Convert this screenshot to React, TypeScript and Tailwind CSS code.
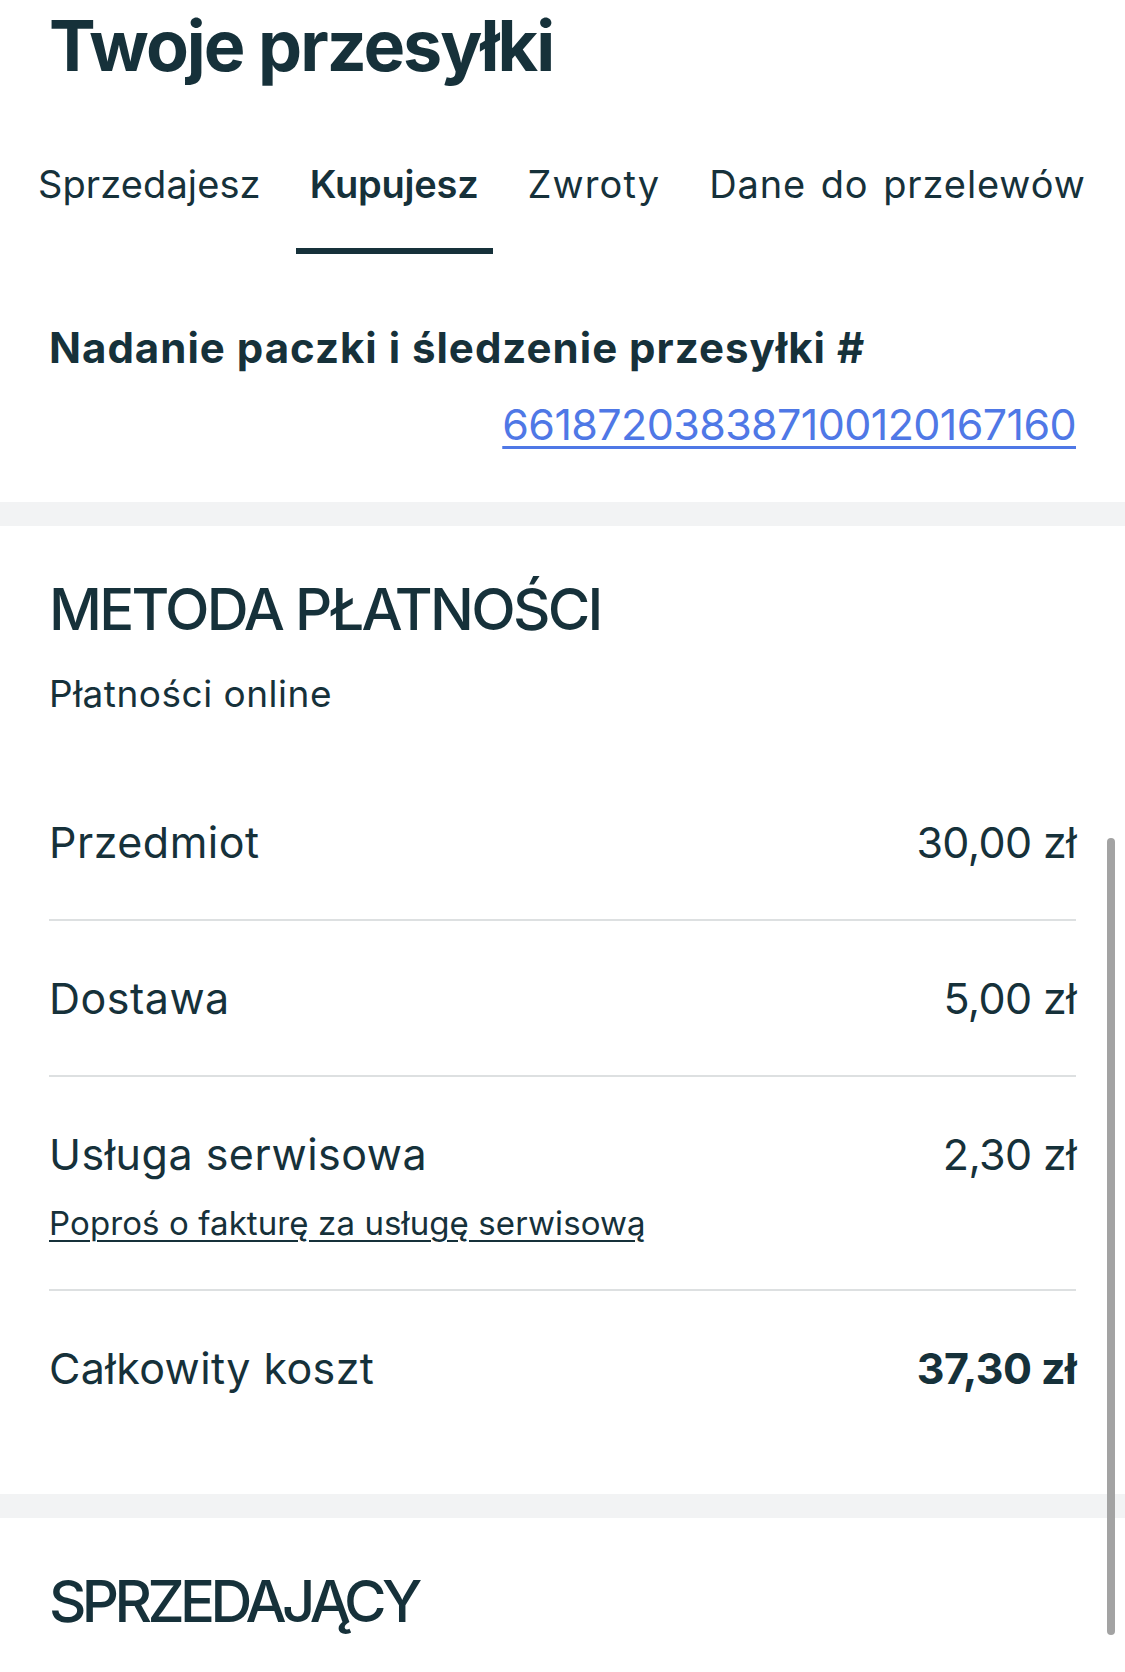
const tabs = [
  { label: "Sprzedajesz", extra: "tracking-[0.1px]" },
  { label: "Kupujesz", extra: "tracking-[-0.2px]" },
  { label: "Zwroty", extra: "tracking-[1.1px]" },
  { label: "Dane do przelewów", extra: "tracking-[0.9px] [word-spacing:3px]" },
];

const rows = [
  { label: "Przedmiot", value: "30,00 zł" },
  { label: "Dostawa", value: "5,00 zł" },
];

function Tabs({ active }: { active: string }) {
  return (
    <div className="flex gap-[21px] overflow-hidden px-[24px] pt-[79px]">
      {tabs.map((t) => (
        <div key={t.label} className="flex shrink-0 flex-col">
          <span
            className={
              t.label === active
                ? `whitespace-nowrap px-[14px] text-[38px] font-semibold leading-[48px] ${t.extra}`
                : `whitespace-nowrap px-[14px] text-[38px] font-normal leading-[48px] ${t.extra}`
            }
          >
            {t.label}
          </span>
          <div
            className={
              t.label === active ? "mt-[40px] h-[6px] bg-[#16313a]" : "mt-[40px] h-[6px]"
            }
          />
        </div>
      ))}
    </div>
  );
}

function Band() {
  return <div className="h-[24px] bg-[#f2f3f4]" />;
}

export default function App() {
  return (
    <div
      className="relative h-[1672px] w-full overflow-hidden bg-white text-[#16313a]"
      style={{ fontFamily: "Inter, 'Noto Sans', sans-serif" }}
    >
      <h1 className="px-[49px] pt-[11px] text-[70px] font-bold leading-[70px] tracking-[-2px]">
        Twoje przesyłki
      </h1>

      <Tabs active="Kupujesz" />

      <section className="px-[49px] pb-[52px] pt-[70px]">
        <h2 className="text-[42px] font-bold leading-[48px] tracking-[1px]">
          Nadanie paczki i śledzenie przesyłki #
        </h2>
        <div className="mt-[26px] flex justify-end">
          <a className="text-[43px] leading-[52px] tracking-[-0.6px] text-[#4f78e6] underline decoration-[3px] underline-offset-[6px]">
            661872038387100120167160
          </a>
        </div>
      </section>

      <Band />

      <section className="px-[49px] pb-[100px] pt-[48px]">
        <h2 className="text-[58px] font-medium leading-[70px] tracking-[-2.7px]">
          METODA PŁATNOŚCI
        </h2>
        <p className="mt-[28px] text-[37px] leading-[43px] tracking-[0.5px]">Płatności online</p>

        <div className="mt-[50px] flex flex-col">
          {rows.map((r) => (
            <div
              key={r.label}
              className="flex items-center justify-between border-b-2 border-[#dde0e1] py-[51px] text-[43px] leading-[52px]"
            >
              <span className="tracking-[0.5px]">{r.label}</span>
              <span className="tracking-[-0.6px]">{r.value}</span>
            </div>
          ))}
          <div className="border-b-2 border-[#dde0e1] pb-[46px] pt-[51px]">
            <div className="flex items-center justify-between text-[43px] leading-[52px]">
              <span className="tracking-[0.5px]">Usługa serwisowa</span>
              <span className="tracking-[-0.6px]">2,30 zł</span>
            </div>
            <a className="mt-[23px] block text-[33px] leading-[40px] tracking-[0.1px] underline decoration-2 underline-offset-[5px]">
              Poproś o fakturę za usługę serwisową
            </a>
          </div>
          <div className="flex items-center justify-between pt-[51px] text-[43px] leading-[52px]">
            <span className="tracking-[0.4px]">Całkowity koszt</span>
            <span className="font-bold tracking-[-0.6px]">37,30 zł</span>
          </div>
        </div>
      </section>

      <Band />

      <section className="px-[49px] pt-[48px]">
        <h2 className="text-[58px] font-medium leading-[70px] tracking-[-4.6px]">SPRZEDAJĄCY</h2>
      </section>

      <div className="absolute right-[10px] top-[838px] h-[797px] w-[8px] rounded-full bg-[#a3a3a3]" />
    </div>
  );
}
